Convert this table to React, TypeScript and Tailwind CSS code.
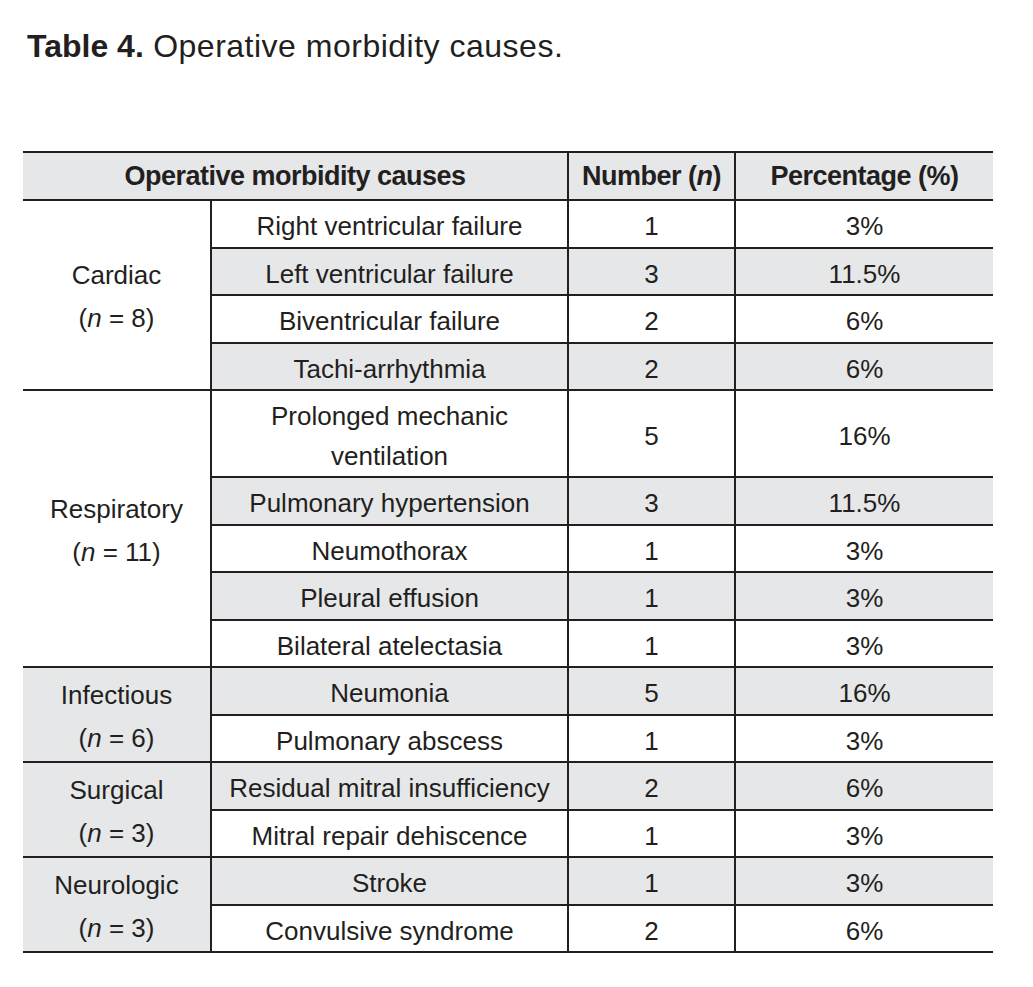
const rows: {
  group?: { name: string; n: number; span: number; shaded: boolean };
  cause: string[];
  num: number;
  pct: string;
  tall?: boolean;
}[] = [
  { group: { name: 'Cardiac', n: 8, span: 4, shaded: false }, cause: ['Right ventricular failure'], num: 1, pct: '3%' },
  { cause: ['Left ventricular failure'], num: 3, pct: '11.5%' },
  { cause: ['Biventricular failure'], num: 2, pct: '6%' },
  { cause: ['Tachi-arrhythmia'], num: 2, pct: '6%' },
  { group: { name: 'Respiratory', n: 11, span: 5, shaded: false }, cause: ['Prolonged mechanic', 'ventilation'], num: 5, pct: '16%', tall: true },
  { cause: ['Pulmonary hypertension'], num: 3, pct: '11.5%' },
  { cause: ['Neumothorax'], num: 1, pct: '3%' },
  { cause: ['Pleural effusion'], num: 1, pct: '3%' },
  { cause: ['Bilateral atelectasia'], num: 1, pct: '3%' },
  { group: { name: 'Infectious', n: 6, span: 2, shaded: true }, cause: ['Neumonia'], num: 5, pct: '16%' },
  { cause: ['Pulmonary abscess'], num: 1, pct: '3%' },
  { group: { name: 'Surgical', n: 3, span: 2, shaded: true }, cause: ['Residual mitral insufficiency'], num: 2, pct: '6%' },
  { cause: ['Mitral repair dehiscence'], num: 1, pct: '3%' },
  { group: { name: 'Neurologic', n: 3, span: 2, shaded: true }, cause: ['Stroke'], num: 1, pct: '3%' },
  { cause: ['Convulsive syndrome'], num: 2, pct: '6%' },
];

export default function App() {
  return (
    <div
      className="w-[1033px] h-[987px] bg-white text-[#231f20] overflow-hidden"
      style={{ fontFamily: '"Liberation Sans", Arial, sans-serif' }}
    >
      <div className="pt-[28px] pl-[27px] text-[32px] leading-[37px] tracking-[0.5px]">
        <span className="font-bold tracking-normal">Table 4.</span> Operative morbidity causes.
      </div>

      <div className="mt-[86px] px-[23px]">
        <table className="w-[970px] border-collapse table-fixed text-center text-[26px]">
          <colgroup>
            <col className="w-[188px]" />
            <col className="w-[357px]" />
            <col className="w-[167px]" />
            <col className="w-[258px]" />
          </colgroup>
          <thead>
            <tr className="h-[48px] bg-[#e6e7e8] text-[27px] font-bold tracking-[-0.5px]">
              <th colSpan={2} className="border-y-2 border-[#231f20] font-bold">
                Operative morbidity causes
              </th>
              <th className="border-2 border-[#231f20] font-bold">
                Number (<i>n</i>)
              </th>
              <th className="border-y-2 border-l-2 border-[#231f20] font-bold">
                Percentage (%)
              </th>
            </tr>
          </thead>
          <tbody>
            {rows.map((r, i) => {
              const shaded = i % 2 === 1;
              return (
                <tr key={i} className={r.tall ? 'h-[87px]' : 'h-[47.5px]'}>
                  {r.group && (
                    <td
                      rowSpan={r.group.span}
                      className={`border-y-2 border-r-2 border-[#231f20] leading-[43px] pt-[4px] ${
                        r.group.shaded ? 'bg-[#e6e7e8]' : 'bg-white'
                      }`}
                    >
                      <div>{r.group.name}</div>
                      <div>
                        (<i>n</i> = {r.group.n})
                      </div>
                    </td>
                  )}
                  <td
                    className={`border-2 border-[#231f20] pt-[5px] ${
                      r.tall ? 'leading-[40px]' : 'leading-[30px]'
                    } ${shaded ? 'bg-[#e6e7e8]' : 'bg-white'}`}
                  >
                    {r.cause.map((c) => (
                      <div key={c}>{c}</div>
                    ))}
                  </td>
                  <td
                    className={`border-2 border-[#231f20] pt-[5px] leading-[30px] ${
                      shaded ? 'bg-[#e6e7e8]' : 'bg-white'
                    }`}
                  >
                    {r.num}
                  </td>
                  <td
                    className={`border-y-2 border-l-2 border-[#231f20] pt-[5px] leading-[30px] ${
                      shaded ? 'bg-[#e6e7e8]' : 'bg-white'
                    }`}
                  >
                    {r.pct}
                  </td>
                </tr>
              );
            })}
          </tbody>
        </table>
      </div>
    </div>
  );
}
